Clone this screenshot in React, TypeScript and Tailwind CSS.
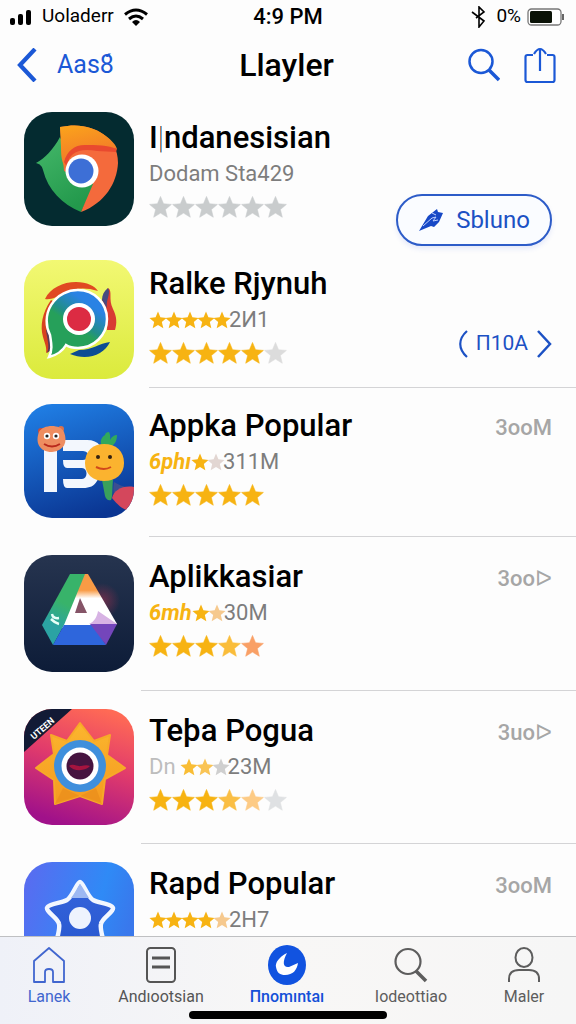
import type { ReactNode } from "react";

const STAR = "M12 0.5l3.2 7.6 8.200.7-6.300 5.400 2 8-7.100-4.300-7.100 4.300 2-8L0.6 8.800l8.200-.7z";
const GOLD = "#f7b312";
const GREY = "#c9cccd";

function Star({ color }: { color: string }) {
  return (
    <svg viewBox="0 0 24 23" className="h-[22px] w-[23px] shrink-0" aria-hidden="true">
      <path d={STAR} fill={color} stroke={color} strokeWidth="0.600" strokeLinejoin="round" />
    </svg>
  );
}

function SmallStar({ color }: { color: string }) {
  return (
    <svg viewBox="0 0 24 23" preserveAspectRatio="none" className="-mr-0.5 h-[18px] w-[18px] shrink-0" aria-hidden="true">
      <path d={STAR} fill={color} />
    </svg>
  );
}

function BrowserArt() {
  return (
    <svg viewBox="0 0 110 114" preserveAspectRatio="none" className="h-full w-full" aria-hidden="true">
      <defs>
        <linearGradient id="brOrange" x1="0" y1="0" x2="0.3" y2="1">
          <stop offset="0" stopColor="#fba51b" />
          <stop offset="1" stopColor="#f0702c" />
        </linearGradient>
        <linearGradient id="brGreen" x1="0" y1="0" x2="0.5" y2="1">
          <stop offset="0" stopColor="#45b86a" />
          <stop offset="1" stopColor="#23994c" />
        </linearGradient>
      </defs>
      <rect width="110" height="114" fill="#042b30" />
      <path d="M36 25C29 38 21 46 12 51c4 1 6 3 7 7 5 20 19 34 38 42l14-28-25-22z" fill="url(#brGreen)" />
      <path d="M36 15c19-4 33 0 43 7 9 6 15 15 15 29-1 20-13 40-37 49l12-28-29-13z" fill="#f46a3c" />
      <path d="M36 15c19-4 33 0 43 7 7 5 12 9 14 15-16-1-30-2-39 2-7 3-10 9-9 20-7-5-8-13-8-24z" fill="url(#brOrange)" />
      <path d="M40 50c3-11 10-17 21-17 11 0 23 0 32 4l-1 3-19-1c-18-3-28 1-30 16z" fill="#e9492f" />
      <circle cx="58" cy="59" r="16.500" fill="#fff" />
      <circle cx="57" cy="59" r="12.500" fill="#3d6fd6" />
    </svg>
  );
}

function ChatArt() {
  return (
    <svg viewBox="0 0 110 119" preserveAspectRatio="none" className="h-full w-full" aria-hidden="true">
      <defs>
        <linearGradient id="chBg" x1="0" y1="0" x2="0" y2="1">
          <stop offset="0" stopColor="#f2f873" />
          <stop offset="1" stopColor="#dbea3c" />
        </linearGradient>
        <linearGradient id="chBubble" x1="0.75" y1="0.1" x2="0.35" y2="0.75">
          <stop offset="0.15" stopColor="#2a82e4" />
          <stop offset="0.55" stopColor="#218e8a" />
          <stop offset="0.7" stopColor="#26a05a" />
        </linearGradient>
      </defs>
      <rect width="110" height="119" fill="url(#chBg)" />
      <path d="M21 39c5-11 18-17 31-17 11 0 19 4 22 9-13-4-24-3-34 2-7 4-13 7-19 6z" fill="#e04a22" />
      <path d="M27 40c-9 13-11 26-8 37 2 7 4 11 3 16l5-3c-3-17-4-33 5-47z" fill="#d8421f" />
      <path d="M22 70c1 9 4 16 1 23l4-3-2-20z" fill="#5a3a58" />
      <path d="M84 28c5 3 0 11 5 21 4 8 4 14 2 21h-8c1-11-1-20-5-30z" fill="#d83b33" />
      <path d="M84 28c-4 3-6 7-6 12l5 8c-1-8 2-10 2-17z" fill="#474a80" />
      <path d="M86 82c-6 13-23 19-40 12l9-4c14 0 20-7 31-8z" fill="#0c4c93" />
      <path d="M54 30a28.500 28.500 0 0 1 0 58c-5 0-9-1-12-3-4 7-9 10-17 12 4-8 2-15 1-22a31 31 0 0 1 28-45z" fill="url(#chBubble)" stroke="#fff" strokeWidth="2.500" />
      <circle cx="55" cy="59" r="16" fill="#fff" />
      <circle cx="55" cy="59" r="12" fill="#dc2b43" />
    </svg>
  );
}

function LettersArt() {
  return (
    <svg viewBox="0 0 110 114" preserveAspectRatio="none" className="h-full w-full" aria-hidden="true">
      <defs>
        <linearGradient id="leBg" x1="0.3" y1="0" x2="0.6" y2="1">
          <stop offset="0" stopColor="#1f7ce2" />
          <stop offset="1" stopColor="#0a3592" />
        </linearGradient>
      </defs>
      <rect width="110" height="114" fill="url(#leBg)" />
      <path d="M20 43h13v45H20z" fill="#f3f7fd" />
      <path d="M39 36h24c12 0 17 8 15 17-1 4-3 6-5 7 4 4 4 12 0 17-3 5-7 7-14 7H43q-4 0-4-9h19c6 0 6-11 0-11H43q-4 0-4-8h20c7 0 7-9 0-9H39z" fill="#f3f7fd" />
      <circle cx="17" cy="27" r="3" fill="#c94c3c" />
      <circle cx="37" cy="25" r="3" fill="#d9714c" />
      <path d="M15 28c4-8 22-8 25 0 4 10 0 19-12 20-13 0-17-10-13-20z" fill="#ee8d60" />
      <circle cx="23" cy="32" r="3.200" fill="#fff" />
      <circle cx="32" cy="32" r="3.200" fill="#fff" />
      <circle cx="23" cy="32" r="1.600" fill="#222" />
      <circle cx="32" cy="32" r="1.600" fill="#222" />
      <path d="M20 40q8 5 16 0" stroke="#b92a1c" strokeWidth="2" fill="none" />
      <path d="M78 42c-3-5 0-9 3-11 0-2 2-3 4-3 2 4 1 7 1 8 2-4 5-5 7-5 0 7-3 10-8 13z" fill="#31a85c" />
      <path d="M78 76h11c-1 10 0 16-2 20-3 1-5-1-6-4z" fill="#39a05c" />
      <path d="M90 78c5 3 10 5 14 5l-8 14c-6-3-8-8-6-19z" fill="#3b4e91" />
      <path d="M88 94c2-8 11-13 22-11v24c-8 0-13-2-22-13z" fill="#d4475c" />
      <path d="M80 40c12 0 20 7 20 19 0 11-8 18-20 18-11 0-19-7-19-18 0-12 8-19 19-19z" fill="#fbb32f" />
      <circle cx="74" cy="53" r="2" fill="#332110" />
      <circle cx="86" cy="53" r="2" fill="#332110" />
      <path d="M72 63q8 4 15 0" stroke="#d1481b" strokeWidth="2" fill="none" />
    </svg>
  );
}

function PrismArt() {
  return (
    <svg viewBox="0 0 110 117" preserveAspectRatio="none" className="h-full w-full" aria-hidden="true">
      <defs>
        <linearGradient id="prBg" x1="0" y1="0" x2="0" y2="1">
          <stop offset="0" stopColor="#26344f" />
          <stop offset="1" stopColor="#0d1c38" />
        </linearGradient>
        <linearGradient id="prGreen" x1="0.6" y1="0" x2="0.3" y2="1">
          <stop offset="0.4" stopColor="#38b36a" />
          <stop offset="0.75" stopColor="#2ba3a3" />
        </linearGradient>
        <linearGradient id="prWhite" x1="0" y1="0" x2="0" y2="1">
          <stop offset="0.3" stopColor="#f99b45" />
          <stop offset="0.45" stopColor="#fff" />
        </linearGradient>
        <radialGradient id="prGlow">
          <stop offset="0" stopColor="#a33250" stopOpacity="0.6" />
          <stop offset="1" stopColor="#a33250" stopOpacity="0" />
        </radialGradient>
      </defs>
      <rect width="110" height="117" fill="url(#prBg)" />
      <circle cx="78" cy="46" r="18" fill="url(#prGlow)" />
      <path d="M60 19h4l29 50-9 4H38z" fill="url(#prWhite)" />
      <path d="M46 19h15L40 70 29 90 18 70z" fill="url(#prGreen)" />
      <path d="M40 70h29l13 20H29z" fill="#2e66dc" />
      <path d="M66 69h27L82 90z" fill="#7446bb" />
      <path d="M74 56l19 13H65c5-2 8-7 9-13z" fill="#d7b3e4" />
      <path d="M56 43l7 15H51z" fill="#855467" />
      <path d="M28 59q1 5 7 4M27 64q4 4 8 5" stroke="#e8fff8" strokeWidth="2.500" fill="none" />
    </svg>
  );
}

function SunArt() {
  return (
    <svg viewBox="0 0 110 116" preserveAspectRatio="none" className="h-full w-full" aria-hidden="true">
      <defs>
        <linearGradient id="suBg" x1="0.7" y1="0" x2="0.4" y2="1">
          <stop offset="0" stopColor="#ff6a55" />
          <stop offset="0.45" stopColor="#e23c6b" />
          <stop offset="1" stopColor="#a0118a" />
        </linearGradient>
        <linearGradient id="suRay" x1="0" y1="0" x2="0" y2="1">
          <stop offset="0" stopColor="#fbb62e" />
          <stop offset="1" stopColor="#f59a20" />
        </linearGradient>
      </defs>
      <rect width="110" height="116" fill="url(#suBg)" />
      <path d="M0 0h48L0 43z" fill="#121a35" />
      <text x="10" y="31" transform="rotate(-41 10 31)" fill="#fff" className="font-['Roboto',sans-serif] text-[9px] font-bold">
        UTEEN
      </text>
      <path d="M56 14l14 18 16-6-3 20 18 13-20 11-3 25-22-8-25 8-1-24-18-12 18-14-3-19 16 6z" fill="url(#suRay)" stroke="#f7a928" strokeWidth="2" strokeLinejoin="round" />
      <path d="M31 95l8-16 17 8zM78 95l-6-16-16 8z" fill="#e88a1b" opacity="0.6" />
      <circle cx="56" cy="57" r="26" fill="#3f8fdc" />
      <circle cx="56" cy="57" r="18.500" fill="#fff" />
      <circle cx="56" cy="57" r="13.500" fill="#461440" />
      <path d="M45 57c5-3 8 1 12 0s7-1 9 0c-4 5-16 6-21 0z" fill="#a5143f" />
    </svg>
  );
}

function BlueStarArt() {
  return (
    <svg viewBox="0 0 110 116" preserveAspectRatio="none" className="h-full w-full" aria-hidden="true">
      <defs>
        <linearGradient id="bsBg" x1="0" y1="0.1" x2="1" y2="0.4">
          <stop offset="0" stopColor="#5a6bf0" />
          <stop offset="0.7" stopColor="#2f8af6" />
          <stop offset="1" stopColor="#3978ec" />
        </linearGradient>
        <linearGradient id="bsStar" x1="0" y1="0" x2="0" y2="1">
          <stop offset="0" stopColor="#3564dc" />
          <stop offset="1" stopColor="#2858cf" />
        </linearGradient>
      </defs>
      <rect width="110" height="116" fill="url(#bsBg)" />
      <path d="M56 20c3 0 7 14 13 18 6 3 19 4 20 8s-11 10-12 16c-2 7 6 22 2 25-4 2-17-7-23-7s-19 9-23 7c-4-3 4-18 2-25-1-6-13-12-12-16s14-5 20-8c6-4 10-18 13-18z" fill="url(#bsStar)" stroke="#f2f7ff" strokeWidth="4.500" strokeLinejoin="round" />
      <path d="M56 22c2 2 6 9 9 14H47c4-5 7-12 9-14z" fill="#9db8f2" />
      <circle cx="56" cy="56" r="11" fill="#eef3fd" />
    </svg>
  );
}

type App = {
  name: ReactNode;
  art: ReactNode;
  artHeight: string;
  spacing: string;
  textTop: string;
  rating: ReactNode;
  stars: string[];
  side: ReactNode;
  divider: string;
};

function Volume({ children }: { children: ReactNode }) {
  return <span className="text-[22px] leading-[48px] font-medium text-[#a6a6a6]">{children}</span>;
}

function Smalls({ colors }: { colors: string[] }) {
  return (
    <span className="flex items-center">
      {colors.map((c, i) => (
        <SmallStar key={i} color={c} />
      ))}
    </span>
  );
}

const apps: App[] = [
  {
    name: (
      <>
        I<span className="font-thin">|</span>ndanesisian
      </>
    ),
    art: <BrowserArt />,
    artHeight: "h-[114px]",
    spacing: "pt-3 pb-3.5",
    textTop: "pt-1",
    rating: <span>Dodam Sta429</span>,
    stars: [GREY, GREY, GREY, GREY, GREY, GREY],
    side: (
      <button
        type="button"
        className="mt-[82px] flex h-[52px] w-[156px] items-center justify-center gap-3 rounded-full border-2 border-[#2d5cc8] bg-[#fafcff] text-2xl text-[#1c51c4] shadow-[0_3px_5px_rgba(60,90,220,0.12)]"
      >
        <svg viewBox="0 0 26 24" className="h-6 w-[26px]" aria-hidden="true">
          <path d="M1 23L10 8l9-7 1 3 5 1-4 9-5 5-3-1z" fill="#1748c6" />
          <path d="M5 18l9-8 4-1-3 4 5-1M14 5l4 2" stroke="#bfd0ff" strokeWidth="1" fill="none" />
        </svg>
        Sbluno
      </button>
    ),
    divider: "hidden",
  },
  {
    name: "Ralke Rjynuh",
    art: <ChatArt />,
    artHeight: "h-[119px]",
    spacing: "pb-2",
    textTop: "pt-0.5",
    rating: (
      <>
        <Smalls colors={[GOLD, GOLD, GOLD, GOLD, GOLD]} />
        2И1
      </>
    ),
    stars: [GOLD, GOLD, GOLD, GOLD, GOLD, "#dcdcdc"],
    side: (
      <button type="button" className="mt-[68px] flex h-8 items-center gap-2 text-[21px] text-[#1c51c4]">
        <svg viewBox="0 0 10 28" className="h-7 w-2.5" fill="none" stroke="currentColor" strokeWidth="2.200" aria-hidden="true">
          <path d="M9 1C0 9 0 19 9 27" />
        </svg>
        П10A
        <svg viewBox="0 0 16 28" className="h-7 w-4" fill="none" stroke="currentColor" strokeWidth="2.500" aria-hidden="true">
          <path d="M2 1l12 13L2 27" />
        </svg>
      </button>
    ),
    divider: "ml-[149px]",
  },
  {
    name: "Appka Popular",
    art: <LettersArt />,
    artHeight: "h-[114px]",
    spacing: "pt-4 pb-[18px]",
    textTop: "pt-0",
    rating: (
      <>
        <span className="font-bold text-[#f7b312] italic">6phı</span>
        <Smalls colors={[GOLD, "#e2d6d2"]} />
        311M
      </>
    ),
    stars: [GOLD, GOLD, GOLD, GOLD, GOLD],
    side: <Volume>3ooM</Volume>,
    divider: "ml-[149px]",
  },
  {
    name: "Aplikkasiar",
    art: <PrismArt />,
    artHeight: "h-[117px]",
    spacing: "pt-[18px] pb-[18px]",
    textTop: "pt-0",
    rating: (
      <>
        <span className="font-bold text-[#f7b312] italic">6mh</span>
        <Smalls colors={[GOLD, "#f6c98e"]} />
        30M
      </>
    ),
    stars: [GOLD, GOLD, GOLD, "#fabd3a", "#f9a066"],
    side: <Volume>3ooᐅ</Volume>,
    divider: "ml-[141px]",
  },
  {
    name: "Teþa Pogua",
    art: <SunArt />,
    artHeight: "h-[116px]",
    spacing: "pt-[18px] pb-[18px]",
    textTop: "pt-0",
    rating: (
      <>
        <span className="pr-1 text-[#bdbdbd]">Dn</span>
        <Smalls colors={["#f9bd35", "#f9c455", "#cfcfcf"]} />
        23M
      </>
    ),
    stars: [GOLD, GOLD, GOLD, "#fabe44", "#fdcb85", "#dfe1e3"],
    side: <Volume>3uoᐅ</Volume>,
    divider: "ml-[141px]",
  },
  {
    name: "Rapd Popular",
    art: <BlueStarArt />,
    artHeight: "h-[116px]",
    spacing: "pt-[18px] pb-[18px]",
    textTop: "pt-0",
    rating: (
      <>
        <Smalls colors={[GOLD, GOLD, GOLD, GOLD, "#f6c98e"]} />
        2H7
      </>
    ),
    stars: [GOLD, GOLD, GOLD, GOLD, GOLD],
    side: <Volume>3ooM</Volume>,
    divider: "ml-[141px]",
  },
];

function AppRow({ app }: { app: App }) {
  return (
    <li>
      <div className={`flex items-start gap-[15px] pr-6 pl-6 ${app.spacing}`}>
        <div className={`w-[110px] shrink-0 overflow-hidden rounded-[28px] ${app.artHeight}`}>{app.art}</div>
        <div className={`min-w-0 flex-1 ${app.textTop}`}>
          <h2 className="h-11 text-[31px] leading-[44px] font-medium whitespace-nowrap text-black">{app.name}</h2>
          <div className="flex h-7 items-center text-[22px] leading-7 whitespace-nowrap text-[#7d7d7d]">{app.rating}</div>
          <div className="flex pt-2">
            {app.stars.map((c, i) => (
              <Star key={i} color={c} />
            ))}
          </div>
        </div>
        <div className="shrink-0">{app.side}</div>
      </div>
      <div className={`h-px bg-[#d4d4d6] ${app.divider}`} />
    </li>
  );
}

function Tab({ label, color, children }: { label: string; color: string; children: ReactNode }) {
  return (
    <a href="#" className={`flex flex-col items-center ${color}`}>
      <span className="flex h-10 items-center">{children}</span>
      <span className="text-base leading-6">{label}</span>
    </a>
  );
}

export default function App() {
  return (
    <div className="flex h-screen flex-col overflow-hidden bg-[#fdfdfd] font-['Roboto','Liberation_Sans',sans-serif]">
      <header className="shrink-0 text-black">
        <div className="grid h-[30px] grid-cols-[1fr_auto_1fr] items-center px-2.5 pb-0.5">
          <div className="flex items-center text-[19px]">
            <svg viewBox="0 0 22 16" className="mr-2.5 h-4 w-[22px]" aria-hidden="true">
              <rect y="9" width="5" height="7" rx="2" />
              <rect x="8" y="5" width="5" height="11" rx="2" />
              <rect x="16" y="1" width="5" height="15" rx="2" />
            </svg>
            Uoladerr
            <svg viewBox="0 0 24 18" className="ml-2.5 h-[18px] w-6" fill="none" stroke="currentColor" strokeWidth="3" aria-hidden="true">
              <path d="M1 6.500q11-9 22 0M5 11q7-6 14 0" />
              <path d="M8 14q4-4 8 0l-4 4z" fill="currentColor" stroke="none" />
            </svg>
          </div>
          <div className="text-[22px] font-medium">4:9 PM</div>
          <div className="flex items-center justify-end text-[19px]">
            <svg viewBox="0 0 15 22" className="mr-2.5 h-[22px] w-[15px]" fill="none" stroke="currentColor" strokeWidth="1.600" aria-hidden="true">
              <path d="M1 6l12 9-5 6V1l5 5-8 6" />
            </svg>
            0%
            <svg viewBox="0 0 39 18" className="ml-1.5 h-[18px] w-[39px]" aria-hidden="true">
              <rect x="1" y="1" width="33" height="16" rx="3.500" fill="#fff" stroke="#777" strokeWidth="1.300" />
              <rect x="3" y="3" width="22" height="12" rx="1.500" fill="#0a1206" />
              <path d="M35 6h2v6h-2z" fill="#666" />
            </svg>
          </div>
        </div>
        <div className="grid h-[70px] grid-cols-[1fr_auto_1fr] items-center pr-5 pl-[17px] text-[#1b58d6]">
          <a href="#" className="flex items-center gap-5 text-[25px]">
            <svg viewBox="0 0 20 34" className="h-[34px] w-5" fill="none" stroke="currentColor" strokeWidth="4.200" aria-hidden="true">
              <path d="M18 1L3 17l15 16" />
            </svg>
            Aas8́
          </a>
          <h1 className="text-[32px] font-medium text-black">Llayler</h1>
          <div className="flex items-center justify-end gap-6">
            <button type="button" aria-label="Search">
              <svg viewBox="0 0 32 34" className="h-[34px] w-8" fill="none" stroke="currentColor" strokeWidth="2.500" aria-hidden="true">
                <circle cx="13" cy="13.500" r="11.500" />
                <path d="M21 22l10 10" strokeWidth="3.500" />
              </svg>
            </button>
            <button type="button" aria-label="Share">
              <svg viewBox="0 0 32 38" className="h-[38px] w-8" fill="none" stroke="currentColor" strokeWidth="2.200" strokeLinejoin="round" aria-hidden="true">
                <path d="M9 9H3.500Q1.500 9 1.500 11v23q0 2 2 2h25q2 0 2-2V11q0-2-2-2H23M16 25V3M10 8q6-10 12 0" />
              </svg>
            </button>
          </div>
        </div>
      </header>

      <main className="min-h-0 flex-1 overflow-y-auto [scrollbar-width:none]">
        <ul>
          {apps.map((app, i) => (
            <AppRow key={i} app={app} />
          ))}
        </ul>
      </main>

      <nav className="shrink-0 border-t border-[#bfc0c2] bg-linear-to-r from-[#eff1f8] via-[#f8f7f6] to-[#f6f6f6] pb-[5px]">
        <div className="grid h-[74px] grid-cols-[98fr_126fr_126fr_122fr_104fr] items-start pt-2">
          <Tab label="Lanek" color="text-[#4166cf]">
            <svg viewBox="0 0 34 36" className="h-9 w-[34px]" fill="none" stroke="currentColor" strokeWidth="1.800" strokeLinejoin="round" aria-hidden="true">
              <path d="M2 14L17 1l15 13v21H21V25q0-3-4-3t-4 3v10H2z" />
            </svg>
          </Tab>
          <Tab label="Andıootsian" color="text-[#555]">
            <svg viewBox="0 0 30 36" className="h-9 w-[30px]" fill="none" stroke="currentColor" strokeWidth="2" aria-hidden="true">
              <rect x="1" y="1" width="28" height="34" rx="3.500" />
              <path d="M6 11h18M6 20h18" strokeWidth="3" />
            </svg>
          </Tab>
          <Tab label="Пnomıntaı" color="font-medium text-[#1450d8]">
            <svg viewBox="0 0 38 40" className="h-10 w-[38px]" aria-hidden="true">
              <ellipse cx="19" cy="20" rx="19" ry="20" fill="#1153e0" />
              <path d="M19 8C11 12 7 18 8 22c1 6 4 8 9 8 8 0 12-5 13-12l-9 4c-6 1-7-5-2-14z" fill="#fff" />
            </svg>
          </Tab>
          <Tab label="Iodeottiao" color="text-[#5d5d5d]">
            <svg viewBox="0 0 34 36" className="h-9 w-[34px]" fill="none" stroke="currentColor" strokeWidth="2.200" aria-hidden="true">
              <circle cx="14" cy="14.500" r="12.500" />
              <path d="M22 24l10 10" strokeWidth="3.500" />
            </svg>
          </Tab>
          <Tab label="Maler" color="text-[#5d5d5d]">
            <svg viewBox="0 0 34 36" className="h-9 w-[34px]" fill="none" stroke="currentColor" strokeWidth="2" aria-hidden="true">
              <ellipse cx="17" cy="10.500" rx="8.500" ry="9.500" />
              <path d="M2 35v-3q0-9 10-9h10q10 0 10 9v3" />
            </svg>
          </Tab>
        </div>
        <div className="mx-auto h-2 w-[198px] rounded-full bg-black" />
      </nav>
    </div>
  );
}
